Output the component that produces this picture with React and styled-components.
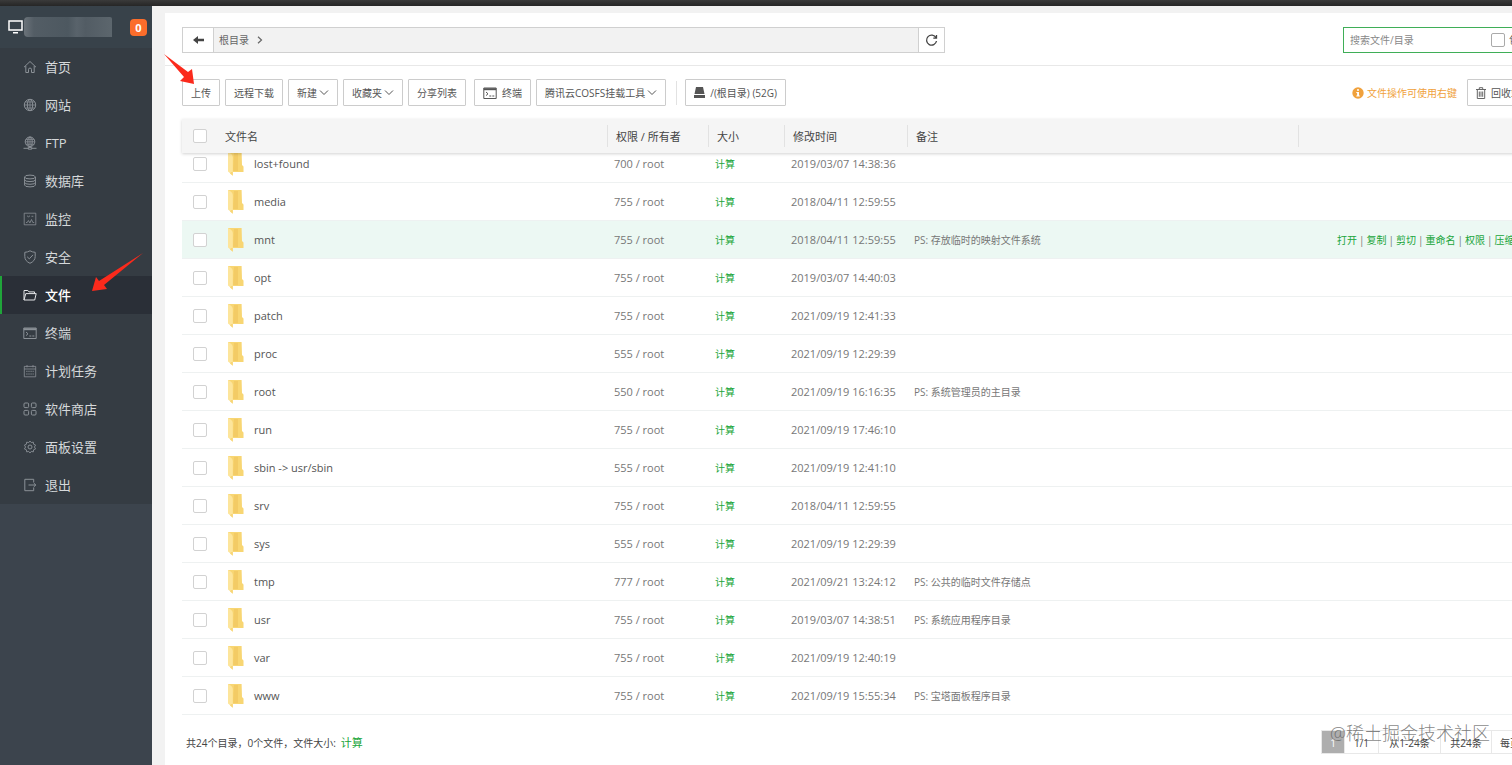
import { useState } from 'react';
import styled, { createGlobalStyle } from 'styled-components';

const GlobalStyle = createGlobalStyle`
  * { box-sizing: border-box; }
  body {
    margin: 0;
    overflow: hidden;
    font-family: "Open Sans", "Noto Sans CJK SC", sans-serif;
    font-size: 10px;
    line-height: 16px;
    color: #666;
    background: #f2f2f2;
  }
  button, input { font: inherit; color: inherit; margin: 0; }
  a { color: inherit; text-decoration: none; }
  svg { display: block; flex: none; }
`;

const TopStrip = styled.div`
  height: 6px;
  background: linear-gradient(#3a3a3a, #262626);
`;

const Layout = styled.div`
  display: flex;
  height: calc(100vh - 6px);
  position: relative;
`;

/* ---------- sidebar ---------- */

const Sidebar = styled.aside`
  flex: none;
  width: 152px;
  background: #3c444d;
`;

const Account = styled.div`
  display: flex;
  align-items: center;
  height: 42px;
  padding: 0 5px 0 8px;
  background: #38424a;
`;

const MaskedName = styled.span`
  width: 88px;
  height: 20px;
  margin-right: 18px;
  border-radius: 4px 2px 0 4px;
  background: linear-gradient(90deg, #6b737a 0, #535d65 10px, #4d5860 50%, #59636b 60%, #525c64 70%, #5c666d);
`;

const Badge = styled.span`
  width: 17px;
  height: 17px;
  border-radius: 4px;
  background: #fb6d2b;
  color: #fff;
  font-size: 11px;
  font-weight: 700;
  line-height: 17px;
  text-align: center;
`;

const Menu = styled.nav`
  background: #353c43;
`;

const MenuItem = styled.a`
  display: flex;
  align-items: center;
  gap: 8px;
  height: 38px;
  padding-left: 21px;
  border-left: 2px solid ${(props) => (props.$active ? '#20a53a' : 'transparent')};
  background: ${(props) => (props.$active ? '#2a2f37' : 'transparent')};
  color: ${(props) => (props.$active ? '#fff' : '#d6d9db')};
  font-size: 13px;
  font-weight: ${(props) => (props.$active ? 500 : 400)};

  svg { color: ${(props) => (props.$active ? '#e4e6e8' : '#8b9197')}; }
`;

/* ---------- main panel ---------- */

const Panel = styled.main`
  flex: 1;
  min-width: 0;
  margin: 7px 0 0 13px;
  padding: 14px 0 0 17px;
  overflow: hidden;
  background: #fff;
`;

// 内容比窗口宽，右侧会被裁掉
const Wide = styled.div`
  width: calc(100% + 96px);
`;

const Bar = styled.div`
  display: flex;
  align-items: center;
  justify-content: space-between;
`;

const PathRow = styled(Bar)`
  margin-left: -17px;
  padding: 0 0 12px 17px;
  border-bottom: 1px solid #e8e8e8;
`;

const PathBox = styled.div`
  display: flex;
  width: 763px;
  height: 26px;
  border: 1px solid #d0d0d0;
  background: #f2f2f2;
`;

const PathButton = styled.button`
  display: flex;
  align-items: center;
  justify-content: center;
  width: ${(props) => props.$width};
  padding: 0;
  border: 0;
  border-${(props) => props.$side}: 1px solid #d0d0d0;
  background: #fff;
  color: #444;
`;

const Crumb = styled.a`
  flex: 1;
  display: flex;
  align-items: center;
  gap: 8px;
  padding-left: 5px;
`;

const SearchBox = styled.div`
  display: flex;
  align-items: center;
  width: 265px;
  height: 26px;
  padding-left: 6px;
  border: 1px solid #3fae57;
  background: #fff;
`;

const SearchInput = styled.input`
  width: 141px;
  padding: 0;
  border: 0;
  outline: 0;
  background: transparent;
  &::placeholder { color: #888; opacity: 1; }
`;

const Check = styled.input.attrs({ type: 'checkbox' })`
  appearance: none;
  display: block;
  flex: none;
  width: 14px;
  height: 14px;
  border: 1px solid ${(props) => (props.$dark ? '#aaa' : '#d2d2d2')};
  border-radius: 2px;
  background: #fff;
  &:checked { background: #20a53a; }
`;

const CheckLabel = styled.label`
  display: flex;
  align-items: center;
  gap: 4px;
  white-space: nowrap;
`;

const Tools = styled(Bar)`
  margin: 13px 0;
`;

const Group = styled.div`
  display: flex;
  align-items: center;
  gap: 5px;
`;

const ToolButton = styled.button`
  display: flex;
  align-items: center;
  gap: ${(props) => (props.$gap ? '5px' : '0')};
  height: 27px;
  margin-left: ${(props) => (props.$apart ? '3px' : '0')};
  padding: 0 8px;
  border: 1px solid #ccc;
  border-radius: 1px;
  background: #fff;
  color: #555;
  white-space: nowrap;
`;

const Separator = styled.span`
  width: 1px;
  height: 24px;
  margin: 0 3px 0 5px;
  background: #e2e2e2;
`;

const RightTools = styled(Group)`
  width: 141px;
`;

const Hint = styled.span`
  display: flex;
  align-items: center;
  gap: 3px;
  margin-left: auto;
  margin-right: 10px;
  color: #f0a13c;
`;

/* ---------- table ---------- */

const Table = styled.table`
  width: 100%;
  table-layout: fixed;
  border-collapse: separate;
  border-spacing: 0;
`;

const HeadWrap = styled.div`
  position: relative;
  background: #f5f5f5;
  box-shadow: 0 1px 3px rgba(0, 0, 0, 0.18);
`;

const HeadCell = styled.th`
  height: 34px;
  padding: 0 0 0 ${(props) => props.$pad || '0'};
  font-size: 11px;
  font-weight: 400;
  text-align: left;
  color: #444;
`;

const HeadLabel = styled.div`
  height: 22px;
  padding-left: ${(props) => (props.$first ? '7px' : '8px')};
  border-left: ${(props) => (props.$first ? '0' : '1px solid #e2e2e2')};
  line-height: 24px;
`;

// 列表已向下滚动一点，第一行上半部分被表头挡住
const ScrollArea = styled.div`
  overflow: hidden;
  & > table { margin-top: -8px; }
`;

const Row = styled.tr`
  background: ${(props) => (props.$hover ? '#ecf8f3' : 'transparent')};
`;

const Cell = styled.td`
  height: 38px;
  padding: 0 0 0 ${(props) => props.$pad || '7px'};
  border-bottom: 1px solid #eef1f1;
  font-size: ${(props) => (props.$small ? '10px' : '11px')};
  color: #777;
  white-space: nowrap;
`;

const FileName = styled.a`
  display: flex;
  align-items: center;
  gap: 10px;
  color: #555;
`;

const GreenLink = styled.a`
  color: #20a53a;
  font-size: ${(props) => (props.$big ? '11px' : '10px')};
`;

const Actions = styled.div`
  display: flex;
  gap: 2px;
`;

const Footer = styled(Bar)`
  padding: 15px 0 0 4px;
  color: #444;
`;

const Summary = styled.span`
  display: flex;
  gap: 5px;
  padding-top: 2px;
`;

const Pager = styled.div`
  display: flex;
  width: 287px;
  height: 24px;
  border: 1px solid #e8e8e8;
`;

const PageCell = styled.span`
  flex: none;
  width: ${(props) => props.$width};
  padding-left: ${(props) => (props.$left ? '8px' : '0')};
  border-right: 1px solid #e8e8e8;
  background: ${(props) => (props.$current ? '#aeaeae' : '#fff')};
  color: ${(props) => (props.$current ? '#fff' : '#444')};
  line-height: 24px;
  text-align: ${(props) => (props.$left ? 'left' : 'center')};
`;

const Watermark = styled.div`
  position: absolute;
  right: 22px;
  bottom: 20px;
  color: rgba(90, 90, 90, 0.75);
  font-size: 18px;
  font-weight: 300;
  line-height: 24px;
  pointer-events: none;
`;

const Arrow = styled.svg`
  position: absolute;
  left: ${(props) => props.$left};
  top: ${(props) => props.$top};
  pointer-events: none;
`;

/* ---------- icons ---------- */

const Line = ({ size = 14, children }) => (
  <svg width={size} height={size} viewBox="0 0 14 14" fill="none" stroke="currentColor" strokeWidth="1" strokeLinejoin="round">
    {children}
  </svg>
);

const icons = {
  home: <Line><path d="M1 7.2 7 1.5l6 5.7M2.8 6v6.5h2.7V9.3q0-1.2 1.5-1.2t1.5 1.2v3.2h2.7V6" /></Line>,
  site: <Line><circle cx="7" cy="7" r="5.7" /><ellipse cx="7" cy="7" rx="2.7" ry="5.7" /><path d="M1.3 7h11.4M7 1.3v11.4M2.3 4h9.4M2.3 10h9.4" strokeWidth=".8" /></Line>,
  ftp: <Line><circle cx="7" cy="5.8" r="4.8" /><ellipse cx="7" cy="5.8" rx="2.2" ry="4.8" /><path d="M2.2 5.8h9.6M7 1v11M3 3.4h8M3 8.2h8" strokeWidth=".8" /><path d="M.5 12.3h4.7M8.8 12.3h4.7M5.3 11.4h3.4v1.8H5.3z" /></Line>,
  db: <Line><ellipse cx="7" cy="3" rx="5.4" ry="1.9" /><path d="M1.6 3v8q0 1.9 5.4 1.9t5.4-1.9V3M1.6 5.7q0 1.9 5.4 1.9t5.4-1.9M1.6 8.4q0 1.9 5.4 1.9t5.4-1.9" /></Line>,
  monitor: <Line><path d="M1.2 1.2h11.6v11.6H1.2zM3 10.5h1.2l1.2-2 1.5 2.4 1.6-3.4 1.3 3h1.4M4 3.8l1.5 1L7 3.8M8.5 4.3h1.8" strokeWidth=".8" /></Line>,
  shield: <Line><path d="M7 .8q2.4 1.4 5.2 1.5v4.2q0 4.5-5.2 6.8-5.2-2.3-5.2-6.8V2.3Q4.6 2.2 7 .8Z" /><path d="m4.2 6.8 2.1 2 3.7-3.9" /></Line>,
  folder: <Line><path d="M1 12V2.5h3.8l1.2 1.4h5.5v1.7M1 12l1.8-6.4h10.4L11.7 12Z" /></Line>,
  terminal: <Line><path d="M.8 2h12.4v10.5H.8z" /><path d="M.8 3.2h12.4" strokeWidth="2" /><path d="m3 6 2 1.8-2 1.8M6.3 10h2M9.3 10h2" /></Line>,
  calendar: <Line><path d="M1.3 2.4h11.4v10.4H1.3zM1.3 5h11.4M4 1v2.4M10 1v2.4" strokeWidth=".8" /><path d="M3.3 7.3h7.4M3.3 10h7.4" strokeDasharray="1.2 .9" /></Line>,
  store: <Line><rect x="1" y="1" width="4.6" height="4.6" rx="1" /><rect x="8.4" y="1" width="4.6" height="4.6" rx="1" /><rect x="1" y="8.4" width="4.6" height="4.6" rx="1" /><rect x="8.4" y="8.4" width="4.6" height="4.6" rx="1" /></Line>,
  gear: <Line><circle cx="7" cy="7" r="2" /><path d="M7 1l1.3 1.6 2-.5.3 2.1 2 .9L11.4 7l1.2 1.9-2 .9-.3 2.1-2-.5L7 13l-1.3-1.6-2 .5-.3-2.1-2-.9L2.6 7 1.4 5.1l2-.9.3-2.1 2 .5Z" strokeWidth=".9" /></Line>,
  exit: <Line><path d="M10.7 4.4V1.3H1.8v11.4h8.9V9.6M5.5 7h7.3M10.7 5l2.1 2-2.1 2" /></Line>,
};

const Chevron = () => (
  <svg width="12" height="10" viewBox="0 0 12 10" fill="none" stroke="#555"><path d="m3 2.5 4 4 4-4" /></svg>
);

const FolderIcon = () => (
  <svg width="17" height="24" viewBox="0 0 17 24">
    <path d="M1 0h13.6l.4 13 1.5 1.5V20H5L1 17Z" fill="#f8d673" />
    <path d="M7 1h4v18H6z" fill="#eebf55" opacity=".45" />
    <path d="M1 0q4.6 2 4.8 5v18.8L4 22 1 19.5Z" fill="#fde59b" />
    <path d="M4 20h1.8v3.8L3 21.4Z" fill="#f8d677" />
  </svg>
);

const menuItems = [
  ['home', '首页'],
  ['site', '网站'],
  ['ftp', 'FTP'],
  ['db', '数据库'],
  ['monitor', '监控'],
  ['shield', '安全'],
  ['folder', '文件'],
  ['terminal', '终端'],
  ['calendar', '计划任务'],
  ['store', '软件商店'],
  ['gear', '面板设置'],
  ['exit', '退出'],
];

const files = [
  ['lost+found', '700', '2019/03/07 14:38:36'],
  ['media', '755', '2018/04/11 12:59:55'],
  ['mnt', '755', '2018/04/11 12:59:55', 'PS: 存放临时的映射文件系统'],
  ['opt', '755', '2019/03/07 14:40:03'],
  ['patch', '755', '2021/09/19 12:41:33'],
  ['proc', '555', '2021/09/19 12:29:39'],
  ['root', '550', '2021/09/19 16:16:35', 'PS: 系统管理员的主目录'],
  ['run', '755', '2021/09/19 17:46:10'],
  ['sbin -> usr/sbin', '555', '2021/09/19 12:41:10'],
  ['srv', '755', '2018/04/11 12:59:55'],
  ['sys', '555', '2021/09/19 12:29:39'],
  ['tmp', '777', '2021/09/21 13:24:12', 'PS: 公共的临时文件存储点'],
  ['usr', '755', '2019/03/07 14:38:51', 'PS: 系统应用程序目录'],
  ['var', '755', '2021/09/19 12:40:19'],
  ['www', '755', '2021/09/19 15:55:34', 'PS: 宝塔面板程序目录'],
];

const actions = ['打开', '复制', '剪切', '重命名', '权限', '压缩'];

const Col = styled.col`
  width: ${(props) => props.$width || 'auto'};
`;

const Columns = () => (
  <colgroup>
    <Col $width="36px" />
    <Col $width="389px" />
    <Col $width="101px" />
    <Col $width="76px" />
    <Col $width="123px" />
    <Col $width="391px" />
    <Col />
  </colgroup>
);

export default function App() {
  const [active, setActive] = useState('文件');
  const [keyword, setKeyword] = useState('');

  return (
    <>
      <GlobalStyle />
      <TopStrip />
      <Layout>
        <Sidebar>
          <Account>
            <svg width="16" height="14" viewBox="0 0 16 14" fill="none" stroke="#fff" strokeWidth="1.5">
              <path d="M1 1h13v9H1zM5 12.7h5" />
            </svg>
            <MaskedName />
            <Badge>0</Badge>
          </Account>
          <Menu>
            {menuItems.map(([icon, label]) => (
              <MenuItem key={label} href="#" $active={active === label} onClick={() => setActive(label)}>
                {icons[icon]}
                {label}
              </MenuItem>
            ))}
          </Menu>
        </Sidebar>

        <Panel>
          <Wide>
            <PathRow>
              <PathBox>
                <PathButton $width="31px" $side="right" aria-label="返回">
                  <svg width="11" height="8" viewBox="0 0 11 8" fill="currentColor"><path d="M0 4 5 0v2.8h6v2.4H5V8Z" /></svg>
                </PathButton>
                <Crumb href="#">
                  根目录
                  <svg width="6" height="8" viewBox="0 0 6 8" fill="none" stroke="#666" strokeWidth="1.2"><path d="m1 .7 3.5 3.3L1 7.3" /></svg>
                </Crumb>
                <PathButton $width="26px" $side="left" aria-label="刷新">
                  <svg width="13" height="13" viewBox="0 0 13 13" fill="none" stroke="currentColor" strokeWidth="1.3">
                    <path d="M11 3.8A5 5 0 1 0 11.5 7M11.5 1v3.2H8.3" />
                  </svg>
                </PathButton>
              </PathBox>
              <SearchBox>
                <SearchInput
                  aria-label="搜索"
                  placeholder="搜索文件/目录"
                  value={keyword}
                  onChange={(e) => setKeyword(e.target.value)}
                />
                <CheckLabel><Check $dark />包含子目录</CheckLabel>
              </SearchBox>
            </PathRow>

            <Tools>
              <Group>
                <ToolButton>上传</ToolButton>
                <ToolButton>远程下载</ToolButton>
                <ToolButton>新建<Chevron /></ToolButton>
                <ToolButton>收藏夹<Chevron /></ToolButton>
                <ToolButton>分享列表</ToolButton>
                <ToolButton $gap $apart>{icons.terminal}终端</ToolButton>
                <ToolButton>腾讯云COSFS挂载工具<Chevron /></ToolButton>
                <Separator />
                <ToolButton $gap>
                  <svg width="11" height="11" viewBox="0 0 11 11" fill="#555"><path d="M2 0h7l1.5 7H.5ZM0 8h11v3H0Z" /></svg>
                  /(根目录) (52G)
                </ToolButton>
              </Group>
              <Hint>
                <svg width="12" height="12" viewBox="0 0 12 12">
                  <circle cx="6" cy="6" r="5.7" fill="#f0a13c" />
                  <path d="M5 2.2h2v1.6H5zM4.3 4.9H7v3.5h.8v1.2H4.3V8.4h.8V6h-.8z" fill="#fff" />
                </svg>
                文件操作可使用右键
              </Hint>
              <RightTools>
                <ToolButton $gap>
                  <svg width="10" height="12" viewBox="0 0 10 12" fill="none" stroke="#666">
                    <path d="M0 2.5h10M3.3 2.3V.7h3.4v1.6M1.3 2.8v8.7h7.4V2.8M3.3 4.5v5.3M5 4.5v5.3M6.7 4.5v5.3" />
                  </svg>
                  回收站
                </ToolButton>
              </RightTools>
            </Tools>

            <HeadWrap>
              <Table>
                <Columns />
                <thead>
                  <tr>
                    <HeadCell $pad="11px"><Check aria-label="全选" /></HeadCell>
                    <HeadCell><HeadLabel $first>文件名</HeadLabel></HeadCell>
                    <HeadCell><HeadLabel>权限 / 所有者</HeadLabel></HeadCell>
                    <HeadCell><HeadLabel>大小</HeadLabel></HeadCell>
                    <HeadCell><HeadLabel>修改时间</HeadLabel></HeadCell>
                    <HeadCell><HeadLabel>备注</HeadLabel></HeadCell>
                    <HeadCell><HeadLabel /></HeadCell>
                  </tr>
                </thead>
              </Table>
            </HeadWrap>
            <ScrollArea>
              <Table>
                <Columns />
                <tbody>
                  {files.map(([name, mode, time, note]) => (
                    <Row key={name} $hover={name === 'mnt'}>
                      <Cell $pad="11px"><Check aria-label={name} /></Cell>
                      <Cell $pad="9px"><FileName href="#"><FolderIcon />{name}</FileName></Cell>
                      <Cell>{mode} / root</Cell>
                      <Cell><GreenLink href="#">计算</GreenLink></Cell>
                      <Cell>{time}</Cell>
                      <Cell $small>{note}</Cell>
                      <Cell $small $pad="39px">
                        {name === 'mnt' ? (
                          <Actions>
                            {actions.map((label, i) => [
                              i > 0 && <span key={`${label}-bar`}>|</span>,
                              <GreenLink key={label} href="#">{label}</GreenLink>,
                            ])}
                          </Actions>
                        ) : null}
                      </Cell>
                    </Row>
                  ))}
                </tbody>
              </Table>
            </ScrollArea>

            <Footer>
              <Summary>共24个目录，0个文件，文件大小: <GreenLink href="#" $big>计算</GreenLink></Summary>
              <Pager>
                <PageCell $width="23px" $current>1</PageCell>
                <PageCell $width="34px">1/1</PageCell>
                <PageCell $width="62px">从1-24条</PageCell>
                <PageCell $width="51px">共24条</PageCell>
                <PageCell $width="115px" $left>每页</PageCell>
              </Pager>
            </Footer>
          </Wide>
        </Panel>

        <Arrow $left="164px" $top="48px" width="32" height="32" viewBox="0 0 32 32" fill="#fb2a1c">
          <path d="M0 0 24 18l4-3 2 15-14-3 4-4Z" />
        </Arrow>
        <Arrow $left="92px" $top="247px" width="52" height="40" viewBox="0 0 52 40" fill="#fb2a1c">
          <path d="M51 0 12 32l3 4-15 2 4-14 3 4Z" />
        </Arrow>
        <Watermark>@稀土掘金技术社区</Watermark>
      </Layout>
    </>
  );
}
